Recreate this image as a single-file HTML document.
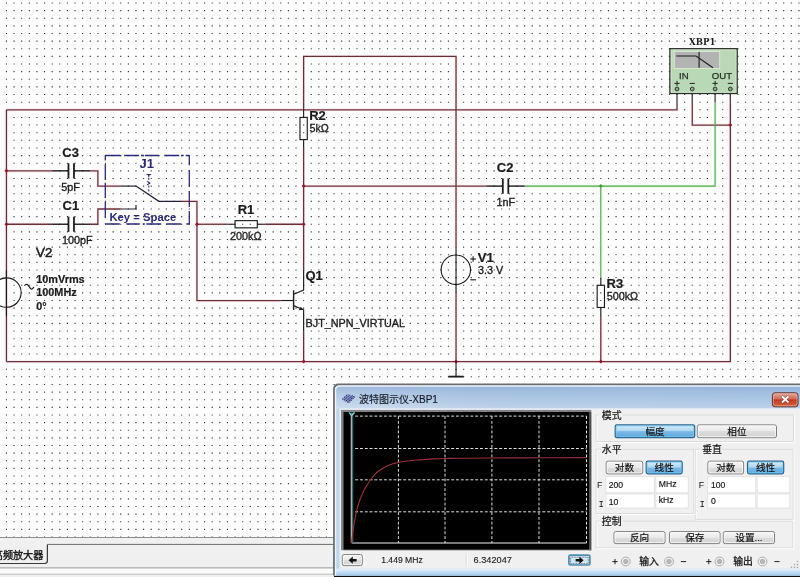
<!DOCTYPE html>
<html lang="zh"><head><meta charset="utf-8"><title>波特图示仪-XBP1</title>
<style>html,body{margin:0;padding:0;background:#fff;overflow:hidden}svg{display:block;will-change:transform}text{white-space:pre}</style></head><body>
<svg width="800" height="577" viewBox="0 0 800 577">
<defs>
<linearGradient id="gBtn" x1="0" y1="0" x2="0" y2="1"><stop offset="0" stop-color="#f6f6f6"/><stop offset="0.5" stop-color="#e9e9e9"/><stop offset="0.5" stop-color="#dddddd"/><stop offset="1" stop-color="#d2d2d2"/></linearGradient>
<linearGradient id="gBlue" x1="0" y1="0" x2="0" y2="1"><stop offset="0" stop-color="#dceffb"/><stop offset="0.48" stop-color="#acd6f0"/><stop offset="0.52" stop-color="#7bb9e5"/><stop offset="1" stop-color="#5fa6da"/></linearGradient>
<linearGradient id="gTitle" x1="0" y1="0" x2="1" y2="0"><stop offset="0" stop-color="#c2d6eb"/><stop offset="0.3" stop-color="#b3cae5"/><stop offset="1" stop-color="#aec8e6"/></linearGradient>
<linearGradient id="gTitleV" x1="0" y1="0" x2="0" y2="1"><stop offset="0" stop-color="#6e96c8" stop-opacity="0.5"/><stop offset="0.55" stop-color="#8fb0d8" stop-opacity="0.15"/><stop offset="1" stop-color="#ffffff" stop-opacity="0.2"/></linearGradient>
<linearGradient id="gClose" x1="0" y1="0" x2="0" y2="1"><stop offset="0" stop-color="#e3a99b"/><stop offset="0.45" stop-color="#cf6a55"/><stop offset="0.5" stop-color="#bf3a24"/><stop offset="1" stop-color="#d4663f"/></linearGradient>
<linearGradient id="gFrameB" x1="0" y1="0" x2="0" y2="1"><stop offset="0" stop-color="#eaf2fa"/><stop offset="0.3" stop-color="#d2e5f6"/><stop offset="1" stop-color="#9cc6ec"/></linearGradient>
</defs>
<rect x="0" y="0" width="800" height="577" fill="#ffffff"/>
<path d="M5.90 3.00H800M5.90 10.63H800M5.90 18.26H800M5.90 25.89H800M5.90 33.52H800M5.90 41.14H800M5.90 48.77H800M5.90 56.40H800M5.90 64.03H800M5.90 71.66H800M5.90 79.29H800M5.90 86.92H800M5.90 94.55H800M5.90 102.18H800M5.90 109.81H800M5.90 117.43H800M5.90 125.06H800M5.90 132.69H800M5.90 140.32H800M5.90 147.95H800M5.90 155.58H800M5.90 163.21H800M5.90 170.84H800M5.90 178.47H800M5.90 186.10H800M5.90 193.72H800M5.90 201.35H800M5.90 208.98H800M5.90 216.61H800M5.90 224.24H800M5.90 231.87H800M5.90 239.50H800M5.90 247.13H800M5.90 254.76H800M5.90 262.39H800M5.90 270.01H800M5.90 277.64H800M5.90 285.27H800M5.90 292.90H800M5.90 300.53H800M5.90 308.16H800M5.90 315.79H800M5.90 323.42H800M5.90 331.05H800M5.90 338.68H800M5.90 346.31H800M5.90 353.93H800M5.90 361.56H800M5.90 369.19H800M5.90 376.82H800M5.90 384.45H800M5.90 392.08H800M5.90 399.71H800M5.90 407.34H800M5.90 414.97H800M5.90 422.59H800M5.90 430.22H800M5.90 437.85H800M5.90 445.48H800M5.90 453.11H800M5.90 460.74H800M5.90 468.37H800M5.90 476.00H800M5.90 483.63H800M5.90 491.26H800M5.90 498.88H800M5.90 506.51H800M5.90 514.14H800M5.90 521.77H800M5.90 529.40H800M5.90 537.03H800" stroke="#2a2a2a" stroke-width="1.1" stroke-dasharray="1.1 6.520" fill="none"/>
<path d="M6.45 109.81 L6.45 361.56" stroke="#fff" stroke-width="2.4" fill="none"/>
<path d="M6.45 109.81 L6.45 361.56" stroke="#fbf0f1" stroke-width="3.2" fill="none"/>
<path d="M6.45 109.81 L677.01 109.81 L677.01 102.18" stroke="#fff" stroke-width="2.4" fill="none"/>
<path d="M6.45 109.81 L677.01 109.81 L677.01 102.18" stroke="#fbf0f1" stroke-width="3.2" fill="none"/>
<path d="M6.45 170.84 L52.17 170.84" stroke="#fff" stroke-width="2.4" fill="none"/>
<path d="M6.45 170.84 L52.17 170.84" stroke="#fbf0f1" stroke-width="3.2" fill="none"/>
<path d="M90.27 170.84 L97.89 170.84 L97.89 186.10 L120.75 186.10" stroke="#fff" stroke-width="2.4" fill="none"/>
<path d="M90.27 170.84 L97.89 170.84 L97.89 186.10 L120.75 186.10" stroke="#fbf0f1" stroke-width="3.2" fill="none"/>
<path d="M6.45 224.24 L52.17 224.24" stroke="#fff" stroke-width="2.4" fill="none"/>
<path d="M6.45 224.24 L52.17 224.24" stroke="#fbf0f1" stroke-width="3.2" fill="none"/>
<path d="M90.27 224.24 L97.89 224.24 L97.89 208.98 L120.75 208.98" stroke="#fff" stroke-width="2.4" fill="none"/>
<path d="M90.27 224.24 L97.89 224.24 L97.89 208.98 L120.75 208.98" stroke="#fbf0f1" stroke-width="3.2" fill="none"/>
<path d="M181.71 201.35 L196.95 201.35 L196.95 224.24" stroke="#fff" stroke-width="2.4" fill="none"/>
<path d="M181.71 201.35 L196.95 201.35 L196.95 224.24" stroke="#fbf0f1" stroke-width="3.2" fill="none"/>
<path d="M196.95 224.24 L227.43 224.24" stroke="#fff" stroke-width="2.4" fill="none"/>
<path d="M196.95 224.24 L227.43 224.24" stroke="#fbf0f1" stroke-width="3.2" fill="none"/>
<path d="M265.53 224.24 L303.63 224.24" stroke="#fff" stroke-width="2.4" fill="none"/>
<path d="M265.53 224.24 L303.63 224.24" stroke="#fbf0f1" stroke-width="3.2" fill="none"/>
<path d="M196.95 224.24 L196.95 300.53 L280.77 300.53" stroke="#fff" stroke-width="2.4" fill="none"/>
<path d="M196.95 224.24 L196.95 300.53 L280.77 300.53" stroke="#fbf0f1" stroke-width="3.2" fill="none"/>
<path d="M303.63 109.81 L303.63 56.40 L456.03 56.40 L456.03 247.13" stroke="#fff" stroke-width="2.4" fill="none"/>
<path d="M303.63 109.81 L303.63 56.40 L456.03 56.40 L456.03 247.13" stroke="#fbf0f1" stroke-width="3.2" fill="none"/>
<path d="M303.63 147.95 L303.63 270.01" stroke="#fff" stroke-width="2.4" fill="none"/>
<path d="M303.63 147.95 L303.63 270.01" stroke="#fbf0f1" stroke-width="3.2" fill="none"/>
<path d="M303.63 331.05 L303.63 361.56" stroke="#fff" stroke-width="2.4" fill="none"/>
<path d="M303.63 331.05 L303.63 361.56" stroke="#fbf0f1" stroke-width="3.2" fill="none"/>
<path d="M456.03 292.90 L456.03 361.56" stroke="#fff" stroke-width="2.4" fill="none"/>
<path d="M456.03 292.90 L456.03 361.56" stroke="#fbf0f1" stroke-width="3.2" fill="none"/>
<path d="M303.63 186.10 L486.51 186.10" stroke="#fff" stroke-width="2.4" fill="none"/>
<path d="M303.63 186.10 L486.51 186.10" stroke="#fbf0f1" stroke-width="3.2" fill="none"/>
<path d="M600.81 315.79 L600.81 361.56" stroke="#fff" stroke-width="2.4" fill="none"/>
<path d="M600.81 315.79 L600.81 361.56" stroke="#fbf0f1" stroke-width="3.2" fill="none"/>
<path d="M6.45 361.56 L730.35 361.56 L730.35 102.18" stroke="#fff" stroke-width="2.4" fill="none"/>
<path d="M6.45 361.56 L730.35 361.56 L730.35 102.18" stroke="#fbf0f1" stroke-width="3.2" fill="none"/>
<path d="M692.25 102.18 L692.25 125.06 L730.35 125.06" stroke="#fff" stroke-width="2.4" fill="none"/>
<path d="M692.25 102.18 L692.25 125.06 L730.35 125.06" stroke="#fbf0f1" stroke-width="3.2" fill="none"/>
<path d="M524.61 186.10 L715.11 186.10 L715.11 102.18" stroke="#fff" stroke-width="2.4" fill="none"/>
<path d="M524.61 186.10 L715.11 186.10 L715.11 102.18" stroke="#f1f9f0" stroke-width="3.2" fill="none"/>
<path d="M600.81 186.10 L600.81 277.64" stroke="#fff" stroke-width="2.4" fill="none"/>
<path d="M600.81 186.10 L600.81 277.64" stroke="#f1f9f0" stroke-width="3.2" fill="none"/>
<path d="M6.45 109.81 L6.45 361.56" stroke="#6c2f39" stroke-width="1.3" fill="none" />
<path d="M6.45 109.81 L677.01 109.81 L677.01 102.18" stroke="#6c2f39" stroke-width="1.3" fill="none" />
<path d="M6.45 170.84 L52.17 170.84" stroke="#6c2f39" stroke-width="1.3" fill="none" />
<path d="M90.27 170.84 L97.89 170.84 L97.89 186.10 L120.75 186.10" stroke="#6c2f39" stroke-width="1.3" fill="none" />
<path d="M6.45 224.24 L52.17 224.24" stroke="#6c2f39" stroke-width="1.3" fill="none" />
<path d="M90.27 224.24 L97.89 224.24 L97.89 208.98 L120.75 208.98" stroke="#6c2f39" stroke-width="1.3" fill="none" />
<path d="M181.71 201.35 L196.95 201.35 L196.95 224.24" stroke="#6c2f39" stroke-width="1.3" fill="none" />
<path d="M196.95 224.24 L227.43 224.24" stroke="#6c2f39" stroke-width="1.3" fill="none" />
<path d="M265.53 224.24 L303.63 224.24" stroke="#6c2f39" stroke-width="1.3" fill="none" />
<path d="M196.95 224.24 L196.95 300.53 L280.77 300.53" stroke="#6c2f39" stroke-width="1.3" fill="none" />
<path d="M303.63 109.81 L303.63 56.40 L456.03 56.40 L456.03 247.13" stroke="#6c2f39" stroke-width="1.3" fill="none" />
<path d="M303.63 147.95 L303.63 270.01" stroke="#6c2f39" stroke-width="1.3" fill="none" />
<path d="M303.63 331.05 L303.63 361.56" stroke="#6c2f39" stroke-width="1.3" fill="none" />
<path d="M456.03 292.90 L456.03 361.56" stroke="#6c2f39" stroke-width="1.3" fill="none" />
<path d="M303.63 186.10 L486.51 186.10" stroke="#6c2f39" stroke-width="1.3" fill="none" />
<path d="M600.81 315.79 L600.81 361.56" stroke="#6c2f39" stroke-width="1.3" fill="none" />
<path d="M6.45 361.56 L730.35 361.56 L730.35 102.18" stroke="#6c2f39" stroke-width="1.3" fill="none" />
<path d="M692.25 102.18 L692.25 125.06 L730.35 125.06" stroke="#6c2f39" stroke-width="1.3" fill="none" />
<path d="M524.61 186.10 L715.11 186.10 L715.11 102.18" stroke="#4aa842" stroke-width="1.15" fill="none" />
<path d="M600.81 186.10 L600.81 277.64" stroke="#4aa842" stroke-width="1.15" fill="none" />
<path d="M598.81 186.10 L600.81 184.10 L602.81 186.10 L600.81 188.10Z" fill="#3fa03a"/>
<path d="M194.95 224.24 L196.95 222.24 L198.95 224.24 L196.95 226.24Z" fill="#9a1428"/>
<path d="M301.63 186.10 L303.63 184.10 L305.63 186.10 L303.63 188.10Z" fill="#9a1428"/>
<path d="M301.63 224.24 L303.63 222.24 L305.63 224.24 L303.63 226.24Z" fill="#9a1428"/>
<path d="M728.35 125.06 L730.35 123.06 L732.35 125.06 L730.35 127.06Z" fill="#9a1428"/>
<path d="M301.63 361.56 L303.63 359.56 L305.63 361.56 L303.63 363.56Z" fill="#9a1428"/>
<path d="M454.03 361.56 L456.03 359.56 L458.03 361.56 L456.03 363.56Z" fill="#9a1428"/>
<path d="M598.81 361.56 L600.81 359.56 L602.81 361.56 L600.81 363.56Z" fill="#9a1428"/>
<path d="M4.45 170.84 L6.45 168.84 L8.45 170.84 L6.45 172.84Z" fill="#9a1428"/>
<path d="M4.45 224.24 L6.45 222.24 L8.45 224.24 L6.45 226.24Z" fill="#9a1428"/>
<line x1="52.17" y1="170.84" x2="68.47" y2="170.84" stroke="#1c1c1c" stroke-width="1.4" />
<line x1="73.97" y1="170.84" x2="90.27" y2="170.84" stroke="#1c1c1c" stroke-width="1.4" />
<line x1="68.47" y1="163.24" x2="68.47" y2="178.44" stroke="#1c1c1c" stroke-width="1.8" />
<line x1="73.97" y1="163.24" x2="73.97" y2="178.44" stroke="#1c1c1c" stroke-width="1.8" />
<line x1="52.17" y1="224.24" x2="68.47" y2="224.24" stroke="#1c1c1c" stroke-width="1.4" />
<line x1="73.97" y1="224.24" x2="90.27" y2="224.24" stroke="#1c1c1c" stroke-width="1.4" />
<line x1="68.47" y1="216.64" x2="68.47" y2="231.84" stroke="#1c1c1c" stroke-width="1.8" />
<line x1="73.97" y1="216.64" x2="73.97" y2="231.84" stroke="#1c1c1c" stroke-width="1.8" />
<line x1="486.51" y1="186.10" x2="502.81" y2="186.10" stroke="#1c1c1c" stroke-width="1.4" />
<line x1="508.31" y1="186.10" x2="524.61" y2="186.10" stroke="#1c1c1c" stroke-width="1.4" />
<line x1="502.81" y1="178.50" x2="502.81" y2="193.70" stroke="#1c1c1c" stroke-width="1.8" />
<line x1="508.31" y1="178.50" x2="508.31" y2="193.70" stroke="#1c1c1c" stroke-width="1.8" />
<line x1="227.43" y1="224.24" x2="235.05" y2="224.24" stroke="#1c1c1c" stroke-width="1.15" />
<line x1="257.91" y1="224.24" x2="265.53" y2="224.24" stroke="#1c1c1c" stroke-width="1.15" />
<rect x="235.05" y="220.64" width="22.26" height="7.2" fill="none" stroke="#1c1c1c" stroke-width="1.15"/>
<line x1="303.63" y1="109.81" x2="303.63" y2="117.43" stroke="#1c1c1c" stroke-width="1.15" />
<line x1="303.63" y1="140.32" x2="303.63" y2="147.95" stroke="#1c1c1c" stroke-width="1.15" />
<rect x="299.98" y="117.43" width="7.3" height="22.19" fill="none" stroke="#1c1c1c" stroke-width="1.15"/>
<line x1="600.81" y1="277.64" x2="600.81" y2="285.27" stroke="#1c1c1c" stroke-width="1.15" />
<line x1="600.81" y1="308.16" x2="600.81" y2="315.79" stroke="#1c1c1c" stroke-width="1.15" />
<rect x="597.16" y="285.27" width="7.3" height="22.19" fill="none" stroke="#1c1c1c" stroke-width="1.15"/>
<circle cx="455.83" cy="269.71" r="14.7" fill="none" stroke="#1c1c1c" stroke-width="1.1"/>
<line x1="456.03" y1="247.13" x2="456.03" y2="292.90" stroke="#1c1c1c" stroke-width="1.15" />
<line x1="470.30" y1="259.00" x2="475.90" y2="259.00" stroke="#1c1c1c" stroke-width="1.1" />
<line x1="473.10" y1="256.20" x2="473.10" y2="261.80" stroke="#1c1c1c" stroke-width="1.1" />
<line x1="470.30" y1="279.80" x2="475.90" y2="279.80" stroke="#1c1c1c" stroke-width="1.15" />
<line x1="456.03" y1="361.56" x2="456.03" y2="376.82" stroke="#1c1c1c" stroke-width="1.15" />
<line x1="448.41" y1="376.62" x2="463.65" y2="376.62" stroke="#1c1c1c" stroke-width="1.8" />
<circle cx="6.45" cy="292.59999999999997" r="14.7" fill="none" stroke="#1c1c1c" stroke-width="1.1"/>
<line x1="6.45" y1="270.01" x2="6.45" y2="315.79" stroke="#1c1c1c" stroke-width="1.15" />
<path d="M24.4 285.6 Q26.6 283.2 28.2 285.4 L30.6 288.6 Q31.8 290.2 33.9 287.2" stroke="#1c1c1c" stroke-width="1.15" fill="none"/>
<line x1="280.77" y1="300.53" x2="293.60" y2="300.53" stroke="#1c1c1c" stroke-width="1.15" />
<line x1="293.60" y1="290.30" x2="293.60" y2="310.00" stroke="#1c1c1c" stroke-width="1.4" />
<path d="M293.60 294.20 L303.63 290.00 L303.63 270.01" stroke="#1c1c1c" stroke-width="1.15" fill="none" />
<path d="M293.60 305.60 L303.63 309.80 L303.63 331.05" stroke="#1c1c1c" stroke-width="1.15" fill="none" />
<path d="M303.33 309.7 l-4.6 0.6 l2.0 -3.6 z" fill="#1c1c1c"/>
<line x1="120.75" y1="186.10" x2="135.99" y2="186.10" stroke="#20203c" stroke-width="1.2" />
<path d="M135.99 186.10 L158.85 201.35 L181.71 201.35" stroke="#20203c" stroke-width="1.2" fill="none" />
<path d="M120.75 208.98 L135.99 208.98 L135.99 204.98" stroke="#20203c" stroke-width="1.2" fill="none" />
<line x1="105.30" y1="155.50" x2="189.30" y2="155.50" stroke="#2a2a7c" stroke-width="1.3" stroke-dasharray="15.5 3.3 15 1.9 2.5 1.4 14.4 5 15 1.9 2.5 1.9 10"/>
<line x1="105.30" y1="224.00" x2="189.30" y2="224.00" stroke="#2a2a7c" stroke-width="1.3" stroke-dasharray="14.5 6.5 13.5 3 2 1.5 15 5 15 5 4"/>
<line x1="105.30" y1="155.50" x2="105.30" y2="224.00" stroke="#2a2a7c" stroke-width="1.3" stroke-dasharray="5 3.5 16 2.7 15.3 4 16 5.6 1"/>
<line x1="189.30" y1="155.50" x2="189.30" y2="224.00" stroke="#2a2a7c" stroke-width="1.3" stroke-dasharray="9.8 4.8 16.7 4.2 16 4 14"/>
<line x1="148.80" y1="174.00" x2="148.80" y2="193.50" stroke="#2a2a7c" stroke-width="1.0" stroke-dasharray="2.2 1.6"/>
<path d="M146.6 174.6 h4.6 M148.8 174.6 v2.6" stroke="#2a2a7c" stroke-width="1.0" fill="none"/>
<path d="M146.8 181.4 l3.4 1.8 l-3.4 1.8" stroke="#2a2a7c" stroke-width="1.0" fill="none"/>
<text x="62.30" y="156.60" font-family='"Liberation Sans", "Noto Sans CJK SC", sans-serif' font-size="13.0" font-weight="bold" fill="#1c1c1c"  stroke="#1c1c1c" stroke-width="0.2">C3</text>
<text x="61.30" y="190.90" font-family='"Liberation Sans", "Noto Sans CJK SC", sans-serif' font-size="10.8" font-weight="normal" fill="#1c1c1c"  stroke="#1c1c1c" stroke-width="0.34">5pF</text>
<text x="62.50" y="210.20" font-family='"Liberation Sans", "Noto Sans CJK SC", sans-serif' font-size="13.0" font-weight="bold" fill="#1c1c1c"  stroke="#1c1c1c" stroke-width="0.2">C1</text>
<text x="61.90" y="244.10" font-family='"Liberation Sans", "Noto Sans CJK SC", sans-serif' font-size="10.8" font-weight="normal" fill="#1c1c1c"  stroke="#1c1c1c" stroke-width="0.34">100pF</text>
<text x="139.60" y="168.00" font-family='"Liberation Sans", "Noto Sans CJK SC", sans-serif' font-size="13.0" font-weight="bold" fill="#2a2a7c" stroke="none">J1</text>
<text x="109.40" y="220.60" font-family='"Liberation Sans", "Noto Sans CJK SC", sans-serif' font-size="11.3" font-weight="bold" fill="#2a2a7c" stroke="none">Key = Space</text>
<text x="237.70" y="214.30" font-family='"Liberation Sans", "Noto Sans CJK SC", sans-serif' font-size="13.0" font-weight="bold" fill="#1c1c1c"  stroke="#1c1c1c" stroke-width="0.2">R1</text>
<text x="230.00" y="240.10" font-family='"Liberation Sans", "Noto Sans CJK SC", sans-serif' font-size="10.8" font-weight="normal" fill="#1c1c1c"  stroke="#1c1c1c" stroke-width="0.34">200kΩ</text>
<text x="309.20" y="120.20" font-family='"Liberation Sans", "Noto Sans CJK SC", sans-serif' font-size="13.0" font-weight="bold" fill="#1c1c1c"  stroke="#1c1c1c" stroke-width="0.2">R2</text>
<text x="309.40" y="132.10" font-family='"Liberation Sans", "Noto Sans CJK SC", sans-serif' font-size="10.8" font-weight="normal" fill="#1c1c1c"  stroke="#1c1c1c" stroke-width="0.34">5kΩ</text>
<text x="305.40" y="279.80" font-family='"Liberation Sans", "Noto Sans CJK SC", sans-serif' font-size="13.0" font-weight="bold" fill="#1c1c1c"  stroke="#1c1c1c" stroke-width="0.2">Q1</text>
<text x="305.60" y="327.10" font-family='"Liberation Sans", "Noto Sans CJK SC", sans-serif' font-size="10.8" font-weight="normal" fill="#1c1c1c"  stroke="#1c1c1c" stroke-width="0.34">BJT_NPN_VIRTUAL</text>
<text x="477.80" y="262.10" font-family='"Liberation Sans", "Noto Sans CJK SC", sans-serif' font-size="13.0" font-weight="bold" fill="#1c1c1c"  stroke="#1c1c1c" stroke-width="0.2">V1</text>
<text x="478.00" y="273.90" font-family='"Liberation Sans", "Noto Sans CJK SC", sans-serif' font-size="10.8" font-weight="normal" fill="#1c1c1c"  stroke="#1c1c1c" stroke-width="0.34">3.3 V</text>
<text x="496.80" y="172.10" font-family='"Liberation Sans", "Noto Sans CJK SC", sans-serif' font-size="13.0" font-weight="bold" fill="#1c1c1c"  stroke="#1c1c1c" stroke-width="0.2">C2</text>
<text x="496.50" y="206.00" font-family='"Liberation Sans", "Noto Sans CJK SC", sans-serif' font-size="10.8" font-weight="normal" fill="#1c1c1c"  stroke="#1c1c1c" stroke-width="0.34">1nF</text>
<text x="606.50" y="288.00" font-family='"Liberation Sans", "Noto Sans CJK SC", sans-serif' font-size="13.0" font-weight="bold" fill="#1c1c1c"  stroke="#1c1c1c" stroke-width="0.2">R3</text>
<text x="606.70" y="300.10" font-family='"Liberation Sans", "Noto Sans CJK SC", sans-serif' font-size="10.8" font-weight="normal" fill="#1c1c1c"  stroke="#1c1c1c" stroke-width="0.34">500kΩ</text>
<text x="36.10" y="257.40" font-family='"Liberation Sans", "Noto Sans CJK SC", sans-serif' font-size="13.2" font-weight="normal" fill="#1c1c1c" stroke="#1c1c1c" stroke-width="0.55">V2</text>
<text x="36.20" y="283.20" font-family='"Liberation Sans", "Noto Sans CJK SC", sans-serif' font-size="10.9" font-weight="bold" fill="#1c1c1c"  stroke="#1c1c1c" stroke-width="0.2">10mVrms</text>
<text x="36.20" y="296.40" font-family='"Liberation Sans", "Noto Sans CJK SC", sans-serif' font-size="10.9" font-weight="bold" fill="#1c1c1c"  stroke="#1c1c1c" stroke-width="0.2">100MHz</text>
<text x="36.20" y="309.60" font-family='"Liberation Sans", "Noto Sans CJK SC", sans-serif' font-size="10.9" font-weight="bold" fill="#1c1c1c"  stroke="#1c1c1c" stroke-width="0.2">0°</text>
<line x1="677.01" y1="89.00" x2="677.01" y2="102.18" stroke="#4a3a3a" stroke-width="1.3" />
<line x1="692.25" y1="89.00" x2="692.25" y2="102.18" stroke="#4a3a3a" stroke-width="1.3" />
<line x1="715.11" y1="89.00" x2="715.11" y2="102.18" stroke="#4a3a3a" stroke-width="1.3" />
<line x1="730.35" y1="89.00" x2="730.35" y2="102.18" stroke="#4a3a3a" stroke-width="1.3" />
<rect x="669.90" y="48.70" width="67.30" height="44.80" fill="#b9d8b5" stroke="#2a2a2a" stroke-width="1.3"/>
<rect x="671.20" y="50.00" width="64.70" height="42.20" fill="none" stroke="#cfe6cb" stroke-width="0.9"/>
<rect x="674.3" y="51.5" width="45.4" height="17" fill="#b3b3b3" stroke="#d6e8d2" stroke-width="1"/>
<path d="M676.3 56 H696 L713 67.7 M699.1 51.9 V67.7" stroke="#1c1c1c" stroke-width="1.1" fill="none"/>
<text x="679.00" y="79.30" font-family='"Liberation Sans", "Noto Sans CJK SC", sans-serif' font-size="9.6" font-weight="normal" fill="#1f2d23" stroke="#1f2d23" stroke-width="0.25">IN</text>
<text x="711.80" y="79.30" font-family='"Liberation Sans", "Noto Sans CJK SC", sans-serif' font-size="9.6" font-weight="normal" fill="#1f2d23" stroke="#1f2d23" stroke-width="0.25">OUT</text>
<line x1="674.41" y1="83.40" x2="679.61" y2="83.40" stroke="#222" stroke-width="1.0" />
<line x1="677.01" y1="80.90" x2="677.01" y2="85.90" stroke="#222" stroke-width="1.0" />
<circle cx="677.01" cy="89" r="1.9" fill="#8fa88c" stroke="#333" stroke-width="1"/>
<line x1="689.65" y1="83.40" x2="694.85" y2="83.40" stroke="#222" stroke-width="1.0" />
<circle cx="692.25" cy="89" r="1.9" fill="#8fa88c" stroke="#333" stroke-width="1"/>
<line x1="712.51" y1="83.40" x2="717.71" y2="83.40" stroke="#222" stroke-width="1.0" />
<line x1="715.11" y1="80.90" x2="715.11" y2="85.90" stroke="#222" stroke-width="1.0" />
<circle cx="715.11" cy="89" r="1.9" fill="#8fa88c" stroke="#333" stroke-width="1"/>
<line x1="727.75" y1="83.40" x2="732.95" y2="83.40" stroke="#222" stroke-width="1.0" />
<circle cx="730.35" cy="89" r="1.9" fill="#8fa88c" stroke="#333" stroke-width="1"/>
<text x="689.00" y="44.90" font-family='"DejaVu Serif", "Liberation Serif", serif' font-size="8.6" font-weight="bold" fill="#222" textLength="26.4" lengthAdjust="spacingAndGlyphs">XBP1</text>
<rect x="0" y="537.5" width="800" height="40" fill="#f0f0f0"/>
<line x1="0.00" y1="537.50" x2="800.00" y2="537.50" stroke="#8e8e8e" stroke-width="1.0" />
<line x1="47.50" y1="544.40" x2="800.00" y2="544.40" stroke="#6a6a6a" stroke-width="1.0" />
<path d="M0 563.5 H44.8 Q47.4 563.5 47.4 560.8 V544.4" fill="none" stroke="#3a3a3a" stroke-width="1.2"/>
<text x="-7.20" y="558.80" font-family='"Liberation Sans", "Noto Sans CJK SC", sans-serif' font-size="10.1" font-weight="normal" fill="#111"  stroke="#111" stroke-width="0.34">高频放大器</text>
<rect x="0" y="568" width="800" height="6" fill="#fafafa"/>
<line x1="0.00" y1="567.90" x2="800.00" y2="567.90" stroke="#9a9a9a" stroke-width="1.0" />
<line x1="0.00" y1="574.20" x2="800.00" y2="574.20" stroke="#bdbdbd" stroke-width="1.0" />
<rect x="334.0" y="575.6" width="466.0" height="2.3999999999999773" fill="#0c0c0c"/>
<path d="M334.0 575.6 V389.5 Q334.0 384.5 339.0 384.5 H801 V575.6 Z" fill="url(#gTitle)"/>
<path d="M334.0 409 V389.5 Q334.0 384.5 339.0 384.5 H801 V409 Z" fill="url(#gTitleV)"/>
<rect x="334.0" y="568.8" width="467.0" height="6.800000000000068" fill="url(#gFrameB)"/>
<path d="M334.0 575.6 V389.5 Q334.0 384.5 339.0 384.5 H801" fill="none" stroke="#6a6c6e" stroke-width="1.8"/>
<path d="M335.55 575.6 V390.0 Q335.55 386.0 340.0 386.0 H801" fill="none" stroke="#f2f7fc" stroke-width="1.3" stroke-opacity="0.95"/>
<rect x="340.6" y="409" width="460" height="159.8" fill="#f0f0f0"/>
<line x1="340.20" y1="409.00" x2="340.20" y2="568.80" stroke="#f4f8fc" stroke-width="1" />
<line x1="340.20" y1="408.70" x2="800.00" y2="408.70" stroke="#dfe9f4" stroke-width="1" />
<path d="M342.0 399.3 L347.4 394.2 L355.2 396.4 L348.6 403.0 Z" fill="#5a5aa6" fill-opacity="0.55"/>
<path d="M342.2 399.4 l5.2 -5.0 M343.9 400.4 l6.2 -5.8 M345.6 401.3 l7.0 -5.8 M347.2 402.3 l6.4 -5.9 M348.8 402.8 l6.2 -6.2" stroke="#23235f" stroke-width="1.0" fill="none" stroke-dasharray="1.6 0.9"/>
<text x="359.00" y="403.30" font-family='"Liberation Sans", "Noto Sans CJK SC", sans-serif' font-size="10.0" font-weight="normal" fill="#161a26" text-anchor="start" stroke="#161a26" stroke-width="0.15">波特图示仪-XBP1</text>
<rect x="772.4" y="392.8" width="25.6" height="14" rx="2.6" fill="url(#gClose)" stroke="#5b2b2b" stroke-width="1"/>
<rect x="773.4" y="393.8" width="23.6" height="12" rx="2" fill="none" stroke="#f3c8bd" stroke-width="0.8" stroke-opacity="0.7"/>
<path d="M782.6 397.0 L787.8 401.9 M787.8 397.0 L782.6 401.9" stroke="#5a2a2a" stroke-width="3.0" stroke-linecap="round" stroke-opacity="0.5"/>
<path d="M782.6 397.0 L787.8 401.9 M787.8 397.0 L782.6 401.9" stroke="#ffffff" stroke-width="1.8" stroke-linecap="square"/>
<rect x="341.0" y="409.9" width="251.4" height="141.6" fill="#fafafa"/>
<rect x="341.0" y="409.9" width="250.3" height="140.4" fill="#858287"/>
<rect x="589.0" y="412.0" width="2.3" height="138.3" fill="#4e4e50"/>
<rect x="343.5" y="549.6" width="247.8" height="0.7" fill="#9a9a9a"/>
<rect x="343.5" y="412.0" width="245.5" height="137.6" fill="#000"/>
<line x1="398.40" y1="416.10" x2="398.40" y2="543.00" stroke="#dcdcdc" stroke-width="1.0" stroke-dasharray="2.9 1.9"/>
<line x1="445.00" y1="416.10" x2="445.00" y2="543.00" stroke="#dcdcdc" stroke-width="1.0" stroke-dasharray="2.9 1.9"/>
<line x1="491.90" y1="416.10" x2="491.90" y2="543.00" stroke="#dcdcdc" stroke-width="1.0" stroke-dasharray="2.9 1.9"/>
<line x1="539.00" y1="416.10" x2="539.00" y2="543.00" stroke="#dcdcdc" stroke-width="1.0" stroke-dasharray="2.9 1.9"/>
<line x1="586.50" y1="416.10" x2="586.50" y2="543.00" stroke="#dcdcdc" stroke-width="1.0" stroke-dasharray="2.9 1.9"/>
<line x1="355.20" y1="416.10" x2="586.50" y2="416.10" stroke="#dcdcdc" stroke-width="1.0" stroke-dasharray="2.9 1.9"/>
<line x1="355.20" y1="448.50" x2="586.50" y2="448.50" stroke="#dcdcdc" stroke-width="1.0" stroke-dasharray="2.9 1.9"/>
<line x1="355.20" y1="479.80" x2="586.50" y2="479.80" stroke="#dcdcdc" stroke-width="1.0" stroke-dasharray="2.9 1.9"/>
<line x1="355.20" y1="511.80" x2="586.50" y2="511.80" stroke="#dcdcdc" stroke-width="1.0" stroke-dasharray="2.9 1.9"/>
<line x1="351.70" y1="543.00" x2="586.50" y2="543.00" stroke="#f0f0f0" stroke-width="1.1" />
<line x1="351.70" y1="416.10" x2="351.70" y2="543.00" stroke="#dcdcdc" stroke-width="1.0" />
<line x1="352.60" y1="415.00" x2="352.60" y2="543.00" stroke="#3a6c6c" stroke-width="1.3" />
<line x1="351.35" y1="415.00" x2="351.35" y2="543.00" stroke="#a9b2b2" stroke-width="1.25" />
<path d="M349.0 412.5 L351.6 415.6 L354.6 412.5" fill="#2a7f80" stroke="#8fe0e0" stroke-width="1.1"/>
<path d="M351.6 542.9 C351.9 540.4 352.7 533.1 353.5 528 C354.3 522.9 355.4 516.4 356.2 512.4 C357.0 508.4 357.7 506.5 358.5 504 C359.3 501.5 359.9 499.8 361 497.2 C362.1 494.6 363.4 491.3 365 488.4 C366.6 485.5 369.0 481.9 370.5 479.7 C372.0 477.5 372.7 476.7 374 475.3 C375.3 473.9 376.6 472.7 378.1 471.5 C379.6 470.3 381.4 469.2 383 468.2 C384.6 467.2 386.0 466.4 387.7 465.7 C389.4 465.0 391.2 464.4 393 463.8 C394.8 463.2 395.9 462.9 398.2 462.4 C400.5 461.9 404.0 461.4 407 461 C410.0 460.6 412.5 460.3 416.3 460 C420.1 459.7 425.3 459.4 430 459.1 C434.7 458.9 439.5 458.6 444.5 458.5 C449.5 458.4 452.2 458.4 460 458.3 C467.8 458.2 477.7 458.1 491 458.0 C504.3 457.9 524.1 457.9 540 457.8 C555.9 457.7 578.8 457.6 586.5 457.6" fill="none" stroke="#9c3036" stroke-width="1.15"/>
<rect x="342.30" y="554.60" width="20.00" height="11.00" rx="1.8" fill="url(#gBtn)" stroke="#7c7c7c" stroke-width="1"/>
<rect x="343.30" y="555.60" width="18.00" height="9.00" rx="1.08" fill="none" stroke="#fbfbfb" stroke-width="0.8"/>
<path d="M348.6 560.2 L352.8 556.6 V559.0 H356.6 V561.4 H352.8 V563.8 Z" fill="#111"/>
<line x1="364.30" y1="554.20" x2="364.30" y2="566.00" stroke="#fbfbfb" stroke-width="1" />
<line x1="466.30" y1="554.20" x2="466.30" y2="566.00" stroke="#d4d4d4" stroke-width="1" />
<line x1="467.20" y1="554.20" x2="467.20" y2="566.00" stroke="#fcfcfc" stroke-width="1" />
<text x="381.20" y="563.00" font-family='"Liberation Sans", "Noto Sans CJK SC", sans-serif' font-size="8.6" font-weight="normal" fill="#1a1a1a" text-anchor="start" stroke="#1a1a1a" stroke-width="0.12">1.449 MHz</text>
<text x="473.60" y="563.00" font-family='"Liberation Sans", "Noto Sans CJK SC", sans-serif' font-size="9.2" font-weight="normal" fill="#1a1a1a" text-anchor="start" stroke="#1a1a1a" stroke-width="0.12">6.342047</text>
<rect x="568.9" y="555.2" width="21.0" height="9.8" rx="1.6" fill="#cfe6f4" stroke="#4f8db2" stroke-width="1.7"/>
<rect x="570.6" y="557.2" width="17.6" height="6.4" fill="none" stroke="#333" stroke-width="0.7" stroke-dasharray="0.8 0.8"/>
<path d="M583.6 560.3 L579.4 556.7 V559.1 H575.6 V561.5 H579.4 V563.9 Z" fill="#111"/>
<path d="M600.5 415.0 H596.2 V441.6 H793.6 V415.0 H622.8" fill="none" stroke="#dadada" stroke-width="1"/>
<path d="M600.5 416.0 H597.2 V440.6 M597.2 442.6 H794.6 V415.0" fill="none" stroke="#fdfdfd" stroke-width="1"/>
<path d="M600.5 449.3 H596.2 V513.6 H693.9 V449.3 H622.8" fill="none" stroke="#dadada" stroke-width="1"/>
<path d="M600.5 450.3 H597.2 V512.6 M597.2 514.6 H694.9 V449.3" fill="none" stroke="#fdfdfd" stroke-width="1"/>
<path d="M701.0 449.3 H695.3 V519.6 H793.2 V449.3 H722.4" fill="none" stroke="#dadada" stroke-width="1"/>
<path d="M701.0 450.3 H696.3 V518.6 M696.3 520.6 H794.2 V449.3" fill="none" stroke="#fdfdfd" stroke-width="1"/>
<path d="M600.5 521.2 H596.2 V547.8 H792.8 V521.2 H622.8" fill="none" stroke="#dadada" stroke-width="1"/>
<path d="M600.5 522.2 H597.2 V546.8 M597.2 548.8 H793.8 V521.2" fill="none" stroke="#fdfdfd" stroke-width="1"/>
<text x="601.80" y="419.30" font-family='"Liberation Sans", "Noto Sans CJK SC", sans-serif' font-size="9.9" font-weight="normal" fill="#111" text-anchor="start" stroke="#111" stroke-width="0.2">模式</text>
<text x="601.80" y="452.90" font-family='"Liberation Sans", "Noto Sans CJK SC", sans-serif' font-size="9.9" font-weight="normal" fill="#111" text-anchor="start" stroke="#111" stroke-width="0.2">水平</text>
<text x="702.20" y="452.90" font-family='"Liberation Sans", "Noto Sans CJK SC", sans-serif' font-size="9.9" font-weight="normal" fill="#111" text-anchor="start" stroke="#111" stroke-width="0.2">垂直</text>
<text x="601.80" y="524.90" font-family='"Liberation Sans", "Noto Sans CJK SC", sans-serif' font-size="9.9" font-weight="normal" fill="#111" text-anchor="start" stroke="#111" stroke-width="0.2">控制</text>
<rect x="615.20" y="424.90" width="79.50" height="12.80" rx="1.8" fill="url(#gBlue)" stroke="#2b608c" stroke-width="1.2"/>
<rect x="616.30" y="426.00" width="77.30" height="10.60" rx="1.08" fill="none" stroke="#6fd0f4" stroke-width="0.9" stroke-opacity="0.8"/>
<text x="655.00" y="434.90" font-family='"Liberation Sans", "Noto Sans CJK SC", sans-serif' font-size="9.6" font-weight="normal" fill="#111" text-anchor="middle" stroke="#111" stroke-width="0.2">幅度</text>
<rect x="697.30" y="424.90" width="79.20" height="12.80" rx="1.8" fill="url(#gBtn)" stroke="#7c7c7c" stroke-width="1"/>
<rect x="698.30" y="425.90" width="77.20" height="10.80" rx="1.08" fill="none" stroke="#fbfbfb" stroke-width="0.8"/>
<text x="736.90" y="434.90" font-family='"Liberation Sans", "Noto Sans CJK SC", sans-serif' font-size="9.6" font-weight="normal" fill="#111" text-anchor="middle" stroke="#111" stroke-width="0.2">相位</text>
<rect x="606.20" y="461.20" width="36.50" height="12.70" rx="1.8" fill="url(#gBtn)" stroke="#7c7c7c" stroke-width="1"/>
<rect x="607.20" y="462.20" width="34.50" height="10.70" rx="1.08" fill="none" stroke="#fbfbfb" stroke-width="0.8"/>
<text x="624.40" y="471.20" font-family='"Liberation Sans", "Noto Sans CJK SC", sans-serif' font-size="9.6" font-weight="normal" fill="#111" text-anchor="middle" stroke="#111" stroke-width="0.2">对数</text>
<rect x="646.20" y="461.20" width="36.00" height="12.70" rx="1.8" fill="url(#gBlue)" stroke="#2b608c" stroke-width="1.2"/>
<rect x="647.30" y="462.30" width="33.80" height="10.50" rx="1.08" fill="none" stroke="#6fd0f4" stroke-width="0.9" stroke-opacity="0.8"/>
<text x="664.20" y="471.20" font-family='"Liberation Sans", "Noto Sans CJK SC", sans-serif' font-size="9.6" font-weight="normal" fill="#111" text-anchor="middle" stroke="#111" stroke-width="0.2">线性</text>
<rect x="707.90" y="461.20" width="35.70" height="12.70" rx="1.8" fill="url(#gBtn)" stroke="#7c7c7c" stroke-width="1"/>
<rect x="708.90" y="462.20" width="33.70" height="10.70" rx="1.08" fill="none" stroke="#fbfbfb" stroke-width="0.8"/>
<text x="725.80" y="471.20" font-family='"Liberation Sans", "Noto Sans CJK SC", sans-serif' font-size="9.6" font-weight="normal" fill="#111" text-anchor="middle" stroke="#111" stroke-width="0.2">对数</text>
<rect x="747.50" y="461.20" width="36.20" height="12.70" rx="1.8" fill="url(#gBlue)" stroke="#2b608c" stroke-width="1.2"/>
<rect x="748.60" y="462.30" width="34.00" height="10.50" rx="1.08" fill="none" stroke="#6fd0f4" stroke-width="0.9" stroke-opacity="0.8"/>
<text x="765.60" y="471.20" font-family='"Liberation Sans", "Noto Sans CJK SC", sans-serif' font-size="9.6" font-weight="normal" fill="#111" text-anchor="middle" stroke="#111" stroke-width="0.2">线性</text>
<rect x="614.00" y="531.60" width="51.00" height="12.00" rx="1.8" fill="url(#gBtn)" stroke="#7c7c7c" stroke-width="1"/>
<rect x="615.00" y="532.60" width="49.00" height="10.00" rx="1.08" fill="none" stroke="#fbfbfb" stroke-width="0.8"/>
<text x="639.50" y="541.40" font-family='"Liberation Sans", "Noto Sans CJK SC", sans-serif' font-size="9.6" font-weight="normal" fill="#111" text-anchor="middle" stroke="#111" stroke-width="0.2">反向</text>
<rect x="669.50" y="531.60" width="50.50" height="12.00" rx="1.8" fill="url(#gBtn)" stroke="#7c7c7c" stroke-width="1"/>
<rect x="670.50" y="532.60" width="48.50" height="10.00" rx="1.08" fill="none" stroke="#fbfbfb" stroke-width="0.8"/>
<text x="694.80" y="541.40" font-family='"Liberation Sans", "Noto Sans CJK SC", sans-serif' font-size="9.6" font-weight="normal" fill="#111" text-anchor="middle" stroke="#111" stroke-width="0.2">保存</text>
<rect x="723.30" y="531.60" width="51.20" height="12.00" rx="1.8" fill="url(#gBtn)" stroke="#7c7c7c" stroke-width="1"/>
<rect x="724.30" y="532.60" width="49.20" height="10.00" rx="1.08" fill="none" stroke="#fbfbfb" stroke-width="0.8"/>
<text x="748.90" y="541.40" font-family='"Liberation Sans", "Noto Sans CJK SC", sans-serif' font-size="9.6" font-weight="normal" fill="#111" text-anchor="middle" stroke="#111" stroke-width="0.2">设置...</text>
<rect x="605.8" y="476.6" width="48.6" height="16.2" fill="#ffffff" stroke="#e3e3e3" stroke-width="1"/>
<rect x="655.9" y="476.6" width="32.4" height="16.2" fill="#ffffff" stroke="#e3e3e3" stroke-width="1"/>
<rect x="605.8" y="494.0" width="48.6" height="14.1" fill="#ffffff" stroke="#e3e3e3" stroke-width="1"/>
<rect x="655.9" y="494.0" width="32.4" height="14.1" fill="#ffffff" stroke="#e3e3e3" stroke-width="1"/>
<rect x="707.6" y="476.6" width="48.2" height="16.2" fill="#ffffff" stroke="#e3e3e3" stroke-width="1"/>
<rect x="757.2" y="476.6" width="32.6" height="16.2" fill="#ffffff" stroke="#e3e3e3" stroke-width="1"/>
<rect x="707.6" y="494.0" width="48.2" height="14.1" fill="#ffffff" stroke="#e3e3e3" stroke-width="1"/>
<rect x="757.2" y="494.0" width="32.6" height="14.1" fill="#ffffff" stroke="#e3e3e3" stroke-width="1"/>
<text x="608.80" y="487.60" font-family='"Liberation Sans", "Noto Sans CJK SC", sans-serif' font-size="8.6" font-weight="normal" fill="#111" text-anchor="start" stroke="#111" stroke-width="0.15">200</text>
<text x="658.80" y="486.50" font-family='"Liberation Sans", "Noto Sans CJK SC", sans-serif' font-size="8.6" font-weight="normal" fill="#111" text-anchor="start" stroke="#111" stroke-width="0.15">MHz</text>
<text x="608.80" y="504.60" font-family='"Liberation Sans", "Noto Sans CJK SC", sans-serif' font-size="8.6" font-weight="normal" fill="#111" text-anchor="start" stroke="#111" stroke-width="0.15">10</text>
<text x="658.80" y="503.40" font-family='"Liberation Sans", "Noto Sans CJK SC", sans-serif' font-size="8.6" font-weight="normal" fill="#111" text-anchor="start" stroke="#111" stroke-width="0.15">kHz</text>
<text x="710.90" y="487.60" font-family='"Liberation Sans", "Noto Sans CJK SC", sans-serif' font-size="8.6" font-weight="normal" fill="#111" text-anchor="start" stroke="#111" stroke-width="0.15">100</text>
<text x="710.90" y="504.10" font-family='"Liberation Sans", "Noto Sans CJK SC", sans-serif' font-size="8.6" font-weight="normal" fill="#111" text-anchor="start" stroke="#111" stroke-width="0.15">0</text>
<text x="596.90" y="487.60" font-family='"Liberation Sans", "Noto Sans CJK SC", sans-serif' font-size="8.8" font-weight="normal" fill="#111" text-anchor="start" >F</text>
<text x="698.70" y="487.60" font-family='"Liberation Sans", "Noto Sans CJK SC", sans-serif' font-size="8.8" font-weight="normal" fill="#111" text-anchor="start" >F</text>
<text x="598.4" y="507.2" font-family='"Liberation Mono", monospace' font-size="9" font-weight="normal" fill="#111">I</text>
<text x="699.6" y="507.2" font-family='"Liberation Mono", monospace' font-size="9" font-weight="normal" fill="#111">I</text>
<line x1="612.40" y1="561.60" x2="617.60" y2="561.60" stroke="#222" stroke-width="1.0" />
<line x1="615.00" y1="559.00" x2="615.00" y2="564.20" stroke="#222" stroke-width="1.0" />
<circle cx="625.8" cy="561.5" r="4.4" fill="#f4f4f4" stroke="#a9a9a9" stroke-width="1"/>
<circle cx="625.8" cy="561.5" r="2.3" fill="#b8b8b8" stroke="#9a9a9a" stroke-width="0.6"/>
<text x="639.20" y="565.20" font-family='"Liberation Sans", "Noto Sans CJK SC", sans-serif' font-size="9.8" font-weight="normal" fill="#111" text-anchor="start" stroke="#111" stroke-width="0.25">输入</text>
<circle cx="669.0" cy="561.5" r="4.4" fill="#f4f4f4" stroke="#a9a9a9" stroke-width="1"/>
<circle cx="669.0" cy="561.5" r="2.3" fill="#b8b8b8" stroke="#9a9a9a" stroke-width="0.6"/>
<line x1="680.90" y1="561.60" x2="686.10" y2="561.60" stroke="#222" stroke-width="1.0" />
<line x1="706.20" y1="561.60" x2="711.40" y2="561.60" stroke="#222" stroke-width="1.0" />
<line x1="708.80" y1="559.00" x2="708.80" y2="564.20" stroke="#222" stroke-width="1.0" />
<circle cx="719.5" cy="561.5" r="4.4" fill="#f4f4f4" stroke="#a9a9a9" stroke-width="1"/>
<circle cx="719.5" cy="561.5" r="2.3" fill="#b8b8b8" stroke="#9a9a9a" stroke-width="0.6"/>
<text x="733.20" y="565.20" font-family='"Liberation Sans", "Noto Sans CJK SC", sans-serif' font-size="9.8" font-weight="normal" fill="#111" text-anchor="start" stroke="#111" stroke-width="0.25">输出</text>
<circle cx="762.5" cy="561.5" r="4.4" fill="#f4f4f4" stroke="#a9a9a9" stroke-width="1"/>
<circle cx="762.5" cy="561.5" r="2.3" fill="#b8b8b8" stroke="#9a9a9a" stroke-width="0.6"/>
<line x1="774.40" y1="561.60" x2="779.60" y2="561.60" stroke="#222" stroke-width="1.0" />
<rect x="796.8" y="560.8" width="1.4" height="1.4" fill="#a8a8a8"/>
<rect x="793.8" y="563.8" width="1.4" height="1.4" fill="#a8a8a8"/>
<rect x="796.8" y="563.8" width="1.4" height="1.4" fill="#a8a8a8"/>
<rect x="790.8" y="566.5999999999999" width="1.4" height="1.4" fill="#a8a8a8"/>
<rect x="793.8" y="566.5999999999999" width="1.4" height="1.4" fill="#a8a8a8"/>
<rect x="796.8" y="566.5999999999999" width="1.4" height="1.4" fill="#a8a8a8"/>
</svg></body></html>
